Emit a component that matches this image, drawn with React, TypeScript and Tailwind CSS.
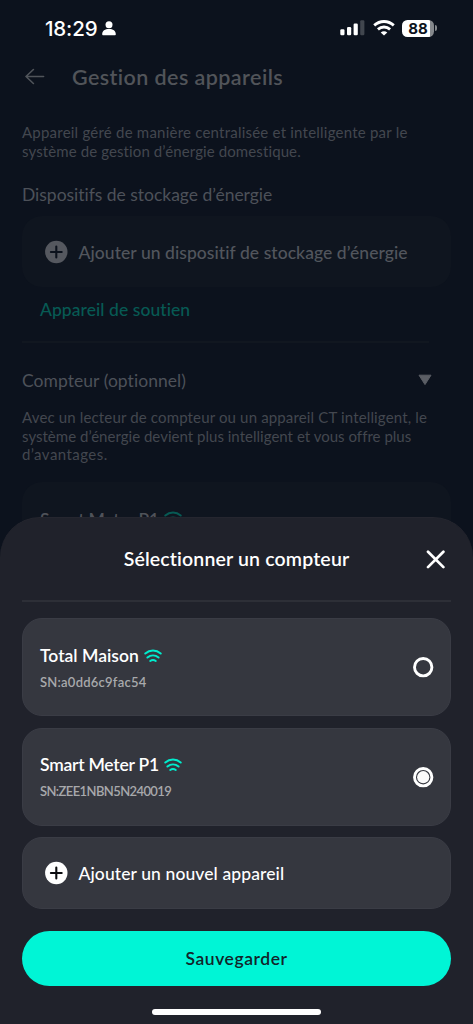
import React from 'react';

interface Meter {
  name: string;
  nameClass: string;
  serial: string;
  serialClass: string;
  selected: boolean;
}

const meters: Meter[] = [
  {
    name: 'Total Maison',
    nameClass: 'tracking-[0.01px]',
    serial: 'a0dd6c9fac54',
    serialClass: 'tracking-[0.24px]',
    selected: false,
  },
  {
    name: 'Smart Meter P1',
    nameClass: 'tracking-[-0.24px]',
    serial: 'ZEE1NBN5N240019',
    serialClass: 'tracking-[-0.6px]',
    selected: true,
  },
];

function MeterWifi({ className }: { className: string }) {
  return (
    <svg
      width="18"
      height="14"
      viewBox="0 0 18 14"
      fill="none"
      stroke="currentColor"
      strokeWidth="2"
      strokeLinecap="round"
      className={className}
    >
      <path d="M1.3 4.5C5.8 0.6 12.2 0.6 16.7 4.5" />
      <path d="M3.4 8.5C6.7 5.7 11.3 5.7 14.6 8.5" />
      <path d="M6.2 12C7.9 10.8 10.1 10.8 11.8 12" />
    </svg>
  );
}

function PlusBadge({ className, crossColor }: { className: string; crossColor: string }) {
  return (
    <svg width="24" height="24" viewBox="0 0 24 24" className={className}>
      <circle cx="12.3" cy="12" r="11.2" fill="currentColor" />
      <path d="M6.9 12h10.8M12.3 6.6v10.8" stroke={crossColor} strokeWidth="2.1" strokeLinecap="round" />
    </svg>
  );
}

function RadioMark({ selected }: { selected: boolean }) {
  return (
    <svg width="22" height="22" viewBox="0 0 22 22" fill="none">
      <circle cx="11.2" cy="11.2" r="8.7" stroke="#fff" strokeWidth="2.9" />
      {selected && <circle cx="11.2" cy="11.2" r="6.1" fill="#fafafa" />}
    </svg>
  );
}

function StatusBar() {
  return (
    <div className="flex h-14 items-center justify-between pl-[45px] pr-9 text-white">
      <div className="flex items-center">
        <span className="pt-px font-['Inter'] text-[20.5px] font-medium leading-6 tracking-[-0.15px]">18:29</span>
        <svg width="14" height="15" viewBox="0 0 14 15" fill="currentColor" className="ml-[5px]">
          <circle cx="7" cy="3.8" r="3.5" />
          <path d="M0.2 13.2C0.2 10 3 8.1 7 8.1s6.8 1.9 6.8 5.1c0 .7-.4 1.1-1.1 1.1H1.3c-.7 0-1.1-.4-1.1-1.1z" />
        </svg>
      </div>
      <div className="flex items-center">
        <svg width="25" height="16" viewBox="0 0 25 16" fill="currentColor">
          <rect x="0.3" y="9.3" width="4.2" height="6" rx="1.2" />
          <rect x="7" y="7" width="4.2" height="8.3" rx="1.2" />
          <rect x="13.6" y="3.6" width="4.2" height="11.7" rx="1.2" />
          <rect x="20.2" y="0.3" width="4.2" height="15" rx="1.2" opacity="0.22" />
        </svg>
        <svg width="22" height="16" viewBox="0 0 22 16" fill="none" stroke="currentColor" strokeWidth="2.8" className="ml-2">
          <path d="M1.2 5.4C6.8 0.2 15.2 0.2 20.8 5.4" />
          <path d="M4.9 9.4C8.5 6.2 13.5 6.2 17.1 9.4" />
          <path d="M11 15.6L7.7 12.4C9.6 10.8 12.4 10.8 14.3 12.4Z" fill="currentColor" stroke="none" />
        </svg>
        <div className="ml-[7px] flex h-[17px] w-8 items-center justify-center rounded-[5.5px] bg-[linear-gradient(90deg,#fff_88%,#85888c_88%)]">
          <span className="font-['Inter'] text-[15px] font-bold leading-[17px] text-[#0c121d]">88</span>
        </div>
        <div className="ml-px h-[6px] w-[2px] rounded-r-full bg-[#85888c]" />
      </div>
    </div>
  );
}

function DeviceManagement() {
  return (
    <div className="text-[#4d5159]">
      <header className="flex h-[42px] items-center pl-[25px]">
        <svg width="20" height="18" viewBox="0 0 20 18" fill="none" stroke="#50545a" strokeWidth="1.6" strokeLinecap="round" strokeLinejoin="round">
          <path d="M18.6 8.5H1M8.4 1.5L1 8.5L8.4 15.5" />
        </svg>
        <h1 className="ml-[27px] whitespace-nowrap text-[21.5px] font-semibold leading-7 tracking-[0.42px] text-[#515459]">
          Gestion des appareils
        </h1>
      </header>

      <div className="px-[22px]">
        <p className="mt-[25px] whitespace-nowrap text-[15px] leading-[18.6px] text-[#43474f]">
          <span className="tracking-[0.22px]">Appareil géré de manière centralisée et intelligente par le</span>
          <br />
          <span className="tracking-[0.11px]">système de gestion d’énergie domestique.</span>
        </p>
        <h2 className="mt-[23px] text-[17.5px] leading-6 tracking-[-0.02px]">Dispositifs de stockage d’énergie</h2>
        <div className="mt-[9px] flex h-[71px] items-center rounded-[20px] bg-[#0f151f] pl-[22px]">
          <PlusBadge className="text-[#55585f]" crossColor="#0c121d" />
          <span className="ml-[10.5px] whitespace-nowrap pt-0.5 text-[17.5px] font-medium tracking-[0.06px] text-[#52565d]">
            Ajouter un dispositif de stockage d’énergie
          </span>
        </div>
        <a className="ml-[18px] mt-[11px] block text-[17.5px] font-medium leading-6 tracking-[0.06px] text-[#075a54]">
          Appareil de soutien
        </a>
        <div className="mr-[22px] mt-[19px] h-[2px] bg-[#111720]" />

        <div className="mt-[25px] flex h-6 items-center justify-between pr-[19px]">
          <h2 className="pt-0.5 text-[17.5px] leading-6 tracking-[0.05px]">Compteur (optionnel)</h2>
          <svg width="14" height="12" viewBox="0 0 14 12" fill="#5b5e65">
            <path d="M1 1.2h12L7 10.6z" stroke="#5b5e65" strokeLinejoin="round" />
          </svg>
        </div>
        <p className="mt-4 whitespace-nowrap text-[15px] leading-[18.6px] text-[#43474f]">
          <span className="tracking-[0.15px]">Avec un lecteur de compteur ou un appareil CT intelligent, le</span>
          <br />
          <span className="tracking-[0.02px]">système d’énergie devient plus intelligent et vous offre plus</span>
          <br />
          <span className="tracking-[0.45px]">d’avantages.</span>
        </p>
        <div className="mt-[18px] flex h-24 items-start rounded-[20px] bg-[#0f151f] pl-[18px] pt-[26px]">
          <span className="text-[17.5px] font-semibold leading-6 tracking-[-0.24px] text-[#4f5259]">Smart Meter P1</span>
          <MeterWifi className="ml-[5px] mt-[3.5px] text-[#075a54]" />
        </div>
      </div>
    </div>
  );
}

function MeterCard({ meter }: { meter: Meter }) {
  return (
    <button className="flex h-[98px] w-full items-center justify-between rounded-[20px] border border-[#3a3c45] bg-[#35373f] pl-[17px] pr-4 text-left">
      <div>
        <div className="flex h-6 items-center">
          <span className={`text-[17.5px] font-semibold leading-6 text-white ${meter.nameClass}`}>{meter.name}</span>
          <MeterWifi className="ml-[5px] text-[#00eccd]" />
        </div>
        <p className={`mt-[5px] text-[13px] font-semibold leading-[18px] text-[#a8a9ac] ${meter.serialClass}`}>
          SN:{meter.serial}
        </p>
      </div>
      <RadioMark selected={meter.selected} />
    </button>
  );
}

function MeterSheet() {
  return (
    <section className="absolute inset-x-0 bottom-0 h-[507px] rounded-t-[40px] border-t border-[#25262f] bg-[#20222b] px-[22px]">
      <div className="flex h-[82px] items-center">
        <h2 className="flex-1 whitespace-nowrap pl-[25px] text-center text-[19.5px] font-semibold leading-6 tracking-[0.15px] text-white">
          Sélectionner un compteur
        </h2>
        <svg width="20" height="20" viewBox="0 0 20 20" fill="none" stroke="#fff" strokeWidth="2.7" strokeLinecap="round" className="mr-[5px]">
          <path d="M2 2.7l15.4 15.4M17.4 2.7L2 18.1" />
        </svg>
      </div>
      <div className="h-[2px] bg-[#2d2f37]" />

      <div className="mt-4 flex flex-col gap-[11.5px]">
        {meters.map((meter) => (
          <MeterCard key={meter.serial} meter={meter} />
        ))}
        <button className="flex h-[72px] w-full items-center rounded-[20px] border border-[#3a3c45] bg-[#35373f] pl-[21px]">
          <PlusBadge className="text-white" crossColor="#0b0c0f" />
          <span className="ml-[10.5px] pt-0.5 text-[17.5px] font-medium tracking-[0.1px] text-white">Ajouter un nouvel appareil</span>
        </button>
      </div>

      <button className="mt-[22px] h-[55px] w-full rounded-full bg-[#00f5d6] pt-0.5 text-[17.5px] font-semibold tracking-[0.55px] text-[#12242a]">
        Sauvegarder
      </button>
      <div className="mx-auto mt-[23px] h-[6px] w-[169px] rounded-full bg-white" />
    </section>
  );
}

export default function App() {
  return (
    <main className="relative h-[1024px] w-[473px] overflow-hidden bg-[#0c121d] font-['Lato',sans-serif]">
      <StatusBar />
      <DeviceManagement />
      <MeterSheet />
    </main>
  );
}
